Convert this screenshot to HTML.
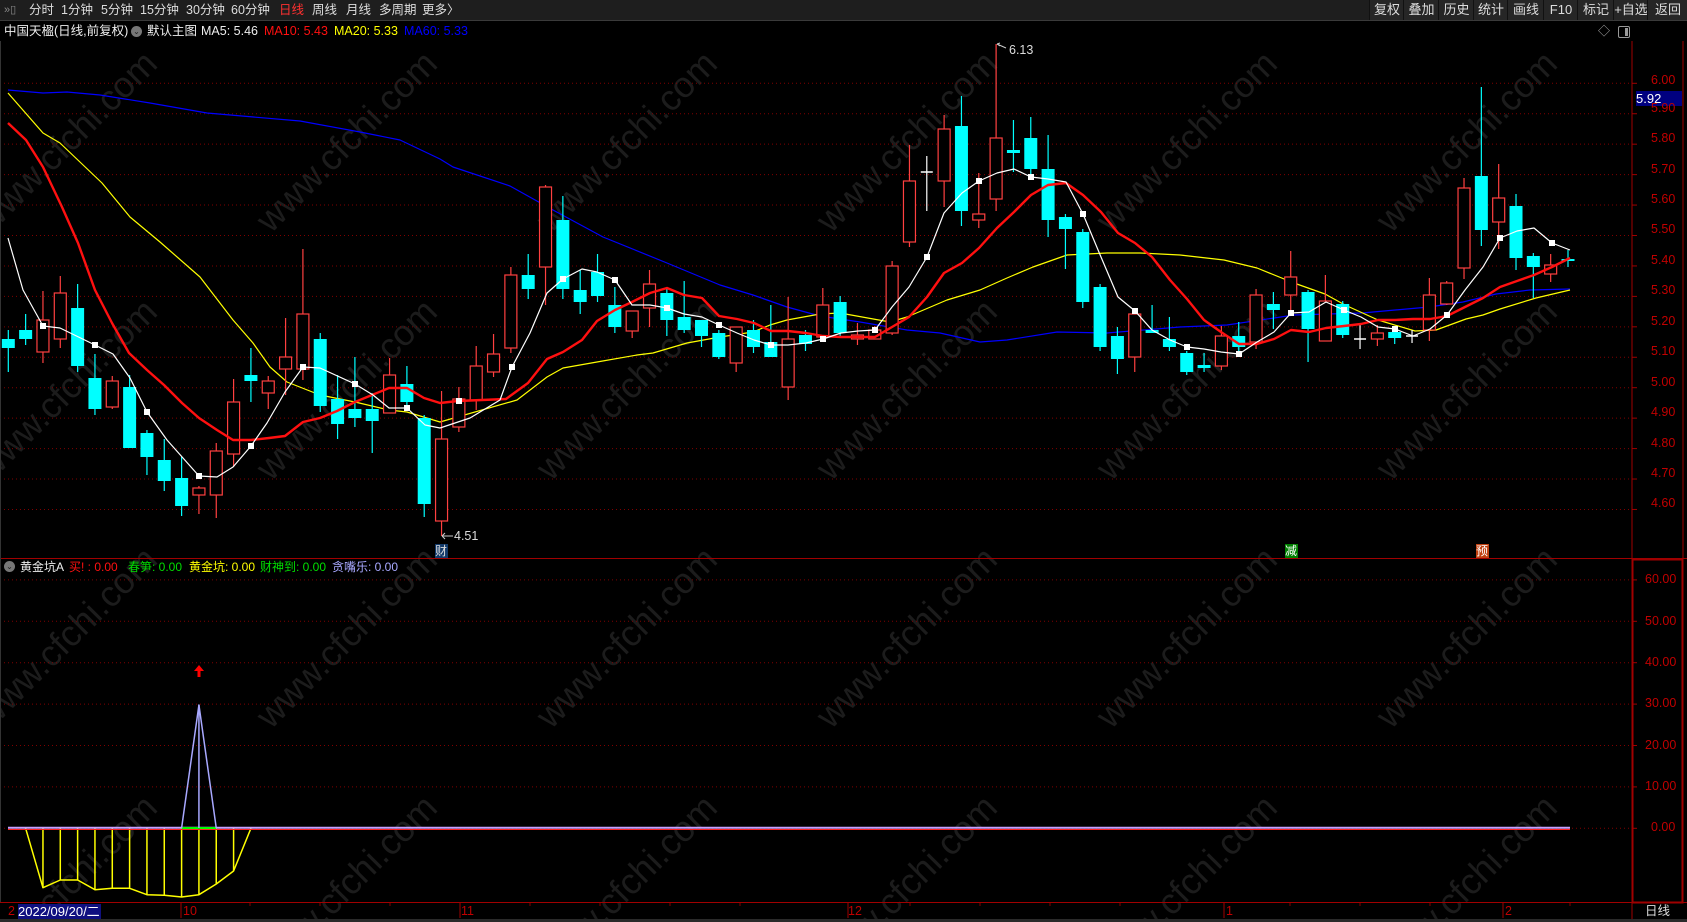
<!DOCTYPE html>
<html><head><meta charset="utf-8">
<style>
html,body{margin:0;padding:0;background:#000;width:1687px;height:922px;overflow:hidden;font-family:"Liberation Sans","Noto Sans CJK SC",sans-serif;}
.t{position:absolute;white-space:nowrap;font-size:12.5px;line-height:15px;}
.l{font-size:12px;}
#top{position:absolute;left:0;top:0;width:1687px;height:20px;background:#1e1e1e;border-bottom:1px solid #3a3a3a;}
.btn{position:absolute;top:0;height:20px;background:#262626;border-left:1px solid #111;color:#ddd;font-size:13px;line-height:20px;text-align:center;}
svg{position:absolute;left:0;top:0;}
</style></head><body>
<svg id="s" width="1687" height="922" xmlns="http://www.w3.org/2000/svg"></svg>
<div id="top"></div>
<div class="t" style="left:4px;top:3px;color:#888;font-size:11px">»▯</div>
<div class="t" style="left:29px;top:3px;color:#ddd">分时</div>
<div class="t" style="left:61px;top:3px;color:#ddd">1分钟</div>
<div class="t" style="left:101px;top:3px;color:#ddd">5分钟</div>
<div class="t" style="left:140px;top:3px;color:#ddd">15分钟</div>
<div class="t" style="left:186px;top:3px;color:#ddd">30分钟</div>
<div class="t" style="left:231px;top:3px;color:#ddd">60分钟</div>
<div class="t" style="left:279px;top:3px;color:#ff3030">日线</div>
<div class="t" style="left:312px;top:3px;color:#ddd">周线</div>
<div class="t" style="left:346px;top:3px;color:#ddd">月线</div>
<div class="t" style="left:379px;top:3px;color:#ddd">多周期</div>
<div class="t" style="left:422px;top:3px;color:#ddd">更多〉</div>
<div class="btn" style="left:1369px;width:34px">复权</div>
<div class="btn" style="left:1403px;width:35px">叠加</div>
<div class="btn" style="left:1438px;width:35px">历史</div>
<div class="btn" style="left:1473px;width:34px">统计</div>
<div class="btn" style="left:1507px;width:36px">画线</div>
<div class="btn" style="left:1543px;width:34px">F10</div>
<div class="btn" style="left:1577px;width:36px">标记</div>
<div class="btn" style="left:1613px;width:34px">+自选</div>
<div class="btn" style="left:1647px;width:40px">返回</div>

<div class="t" style="left:4px;top:24px;color:#eee">中国天楹(日线,前复权)</div>
<div class="t" style="left:131px;top:26px;width:11px;height:11px;border-radius:6px;background:#777;line-height:11px;font-size:8px;text-align:center;color:#222">⌄</div>
<div class="t" style="left:147px;top:24px;color:#eee">默认主图</div>
<div class="t" style="left:201px;top:24px;color:#eee">MA5: 5.46</div>
<div class="t" style="left:264px;top:24px;color:#ff1010">MA10: 5.43</div>
<div class="t" style="left:334px;top:24px;color:#ffff00">MA20: 5.33</div>
<div class="t" style="left:404px;top:24px;color:#0000ff">MA60: 5.33</div>
<div class="t" style="left:1598px;top:24px;color:#aaa;font-size:12px">◇</div>
<div class="t" style="left:1618px;top:26px;width:10px;height:10px;border:1px solid #999;border-radius:2px"><div style="position:absolute;right:1px;top:1px;width:3px;height:8px;background:#999"></div></div>

<div class="t" style="left:1009px;top:43px;color:#ddd">6.13</div>
<div class="t" style="left:454px;top:529px;color:#ddd">4.51</div>
<div class="t" style="left:435px;top:544px;width:13px;height:14px;background:#123a6a;color:#ddd;font-size:12px;line-height:14px">财</div>
<div class="t" style="left:1285px;top:544px;width:13px;height:14px;background:#008000;color:#fff;font-size:12px;line-height:14px">减</div>
<div class="t" style="left:1476px;top:544px;width:13px;height:14px;background:#c04010;color:#fff;font-size:12px;line-height:14px">预</div>

<div class="t" style="left:4px;top:561px;width:11px;height:11px;border-radius:6px;background:#777;line-height:11px;font-size:8px;text-align:center;color:#222">⌄</div>
<div class="t l" style="left:20px;top:560px;color:#eee">黄金坑A</div>
<div class="t l" style="left:69px;top:560px;color:#ff1010">买! : 0.00</div>
<div class="t l" style="left:128px;top:560px;color:#00dd00">春笋: 0.00</div>
<div class="t l" style="left:189px;top:560px;color:#ffff00">黄金坑: 0.00</div>
<div class="t l" style="left:260px;top:560px;color:#00dd00">财神到: 0.00</div>
<div class="t l" style="left:332px;top:560px;color:#a8a8ff">贪嘴乐: 0.00</div>

<div class="t" style="left:1636px;top:91px;width:46px;height:15px;background:#000080;color:#fff;font-size:13px">5.92</div>

<div class="t" style="left:18px;top:904px;width:83px;height:15px;background:#101080;color:#fff;font-size:13px">2022/09/20/二</div>
<div class="t" style="left:8px;top:904px;color:#c00000">2</div>
<div class="t" style="left:183px;top:904px;color:#c00000">10</div>
<div class="t" style="left:461px;top:904px;color:#c00000">11</div>
<div class="t" style="left:848px;top:904px;color:#c00000">12</div>
<div class="t" style="left:1226px;top:904px;color:#c00000">1</div>
<div class="t" style="left:1505px;top:904px;color:#c00000">2</div>
<div class="t" style="left:1645px;top:904px;color:#ddd">日线</div>

<div class="t" style="left:1651px;top:73px;color:#c00000">6.00</div>
<div class="t" style="left:1651px;top:101px;color:#c00000">5.90</div>
<div class="t" style="left:1651px;top:131px;color:#c00000">5.80</div>
<div class="t" style="left:1651px;top:162px;color:#c00000">5.70</div>
<div class="t" style="left:1651px;top:192px;color:#c00000">5.60</div>
<div class="t" style="left:1651px;top:222px;color:#c00000">5.50</div>
<div class="t" style="left:1651px;top:253px;color:#c00000">5.40</div>
<div class="t" style="left:1651px;top:283px;color:#c00000">5.30</div>
<div class="t" style="left:1651px;top:314px;color:#c00000">5.20</div>
<div class="t" style="left:1651px;top:344px;color:#c00000">5.10</div>
<div class="t" style="left:1651px;top:375px;color:#c00000">5.00</div>
<div class="t" style="left:1651px;top:405px;color:#c00000">4.90</div>
<div class="t" style="left:1651px;top:436px;color:#c00000">4.80</div>
<div class="t" style="left:1651px;top:466px;color:#c00000">4.70</div>
<div class="t" style="left:1651px;top:496px;color:#c00000">4.60</div>
<div class="t" style="left:1645px;top:572px;color:#c00000">60.00</div>
<div class="t" style="left:1645px;top:614px;color:#c00000">50.00</div>
<div class="t" style="left:1645px;top:655px;color:#c00000">40.00</div>
<div class="t" style="left:1645px;top:696px;color:#c00000">30.00</div>
<div class="t" style="left:1645px;top:738px;color:#c00000">20.00</div>
<div class="t" style="left:1645px;top:779px;color:#c00000">10.00</div>
<div class="t" style="left:1651px;top:820px;color:#c00000">0.00</div>

<script>
var s=document.getElementById('s'),h='';
for(var r=0;r<4;r++)for(var c=0;c<6;c++){var cx=75+c*280,cy=150+r*248;
h+='<text x="'+cx+'" y="'+cy+'" fill="#1c1c1c" font-size="36" font-family="Liberation Sans" text-anchor="middle" transform="rotate(-45 '+cx+' '+cy+')">www.cfchi.com</text>';}
for(var k=0;k<15;k++){var y=83.3+k*30.44;h+='<line x1="0" x2="1632" y1="'+y+'" y2="'+y+'" stroke="#800000" stroke-dasharray="1,3"/><line x1="1632" x2="1637" y1="'+y+'" y2="'+y+'" stroke="#a00000"/>';}
for(var k=0;k<7;k++){var y=828.3-k*41.4;h+='<line x1="0" x2="1632" y1="'+y+'" y2="'+y+'" stroke="#800000" stroke-dasharray="1,3"/><line x1="1632" x2="1637" y1="'+y+'" y2="'+y+'" stroke="#a00000"/>';}
h+='<line x1="0" x2="1687" y1="558.5" y2="558.5" stroke="#a00000"/>';
h+='<line x1="0" x2="1687" y1="902.5" y2="902.5" stroke="#a00000"/>';
h+='<line x1="1632" x2="1632" y1="41" y2="922" stroke="#a00000"/>';
h+='<rect x="1632.5" y="559.5" width="50" height="343" fill="none" stroke="#a00000" stroke-width="2"/>';
h+='<line x1="1683" x2="1683" y1="41" y2="558" stroke="#a00000"/>';
h+='<line x1="0.5" x2="0.5" y1="41" y2="902" stroke="#333"/>';
h+='<rect x="0" y="919" width="1687" height="3" fill="#2a2a2a"/>';
[181,460,848,1224,1503].forEach(function(x){h+='<line x1="'+x+'" x2="'+x+'" y1="903" y2="918" stroke="#a00000"/>';});
[250,320,390,530,600,670,740,910,980,1050,1120,1290,1360,1430,1570].forEach(function(x){h+='<line x1="'+x+'" x2="'+x+'" y1="903" y2="906" stroke="#800000"/>';});
function X(i){return 8.3+17.33*i;}
function pl(pts,col,w){var d=pts.map(function(p){return p[0]+','+p[1]}).join(' ');h+='<polyline points="'+d+'" fill="none" stroke="'+col+'" stroke-width="'+w+'" stroke-linejoin="round"/>';}
pl([[8,90],[43,93],[67,92],[100,95],[150,103],[207,113],[300,121],[360,132],[400,140],[440,159],[453,167],[510,186],[553,210],[603,237],[667,263],[720,285],[753,295],[787,307],[820,316],[860,322],[907,330],[940,333],[980,342],[1007,340],[1057,332],[1107,333],[1180,327],[1227,325],[1294,315],[1362,313],[1429,307],[1463,302],[1496,294],[1530,290],[1570,289]],'#0000ff',1.2);
pl([[8,93],[43,133],[60,143],[102,183],[130,217],[160,242],[200,277],[233,320],[253,343],[270,367],[287,382],[320,395],[355,402],[389,410],[407,412],[440,422],[517,400],[547,377],[563,368],[597,362],[637,355],[653,353],[687,343],[720,337],[753,332],[770,325],[787,320],[820,314],[840,313],[890,322],[907,317],[947,300],[980,290],[1007,278],[1033,267],[1067,255],[1107,253],[1140,253],[1180,255],[1224,260],[1257,268],[1294,283],[1325,294],[1345,305],[1378,320],[1415,331],[1436,330],[1466,319],[1483,315],[1500,309],[1536,298],[1570,290]],'#ffff00',1.2);
var C=[['c',339,348,330,372],['c',330,339,314,345],['r',320,352,291,363],['r',293,339,276,348],['c',308,366,284,372],['c',378,409,354,415],['r',381,407,376,409],['c',387,448,375,448],['c',433,457,430,475],['c',460,481,439,491],
['c',478,506,457,516],['r',488,495,486,514],['r',451,495,443,518],['r',402,454,379,467],['c',375,381,348,402],['r',381,393,376,409],['r',357,369,318,395],['r',314,369,249,380],['c',339,406,333,412],['c',399,424,375,439],
['c',409,418,357,427],['c',409,421,393,453],['r',375,413,358,413],['c',384,402,366,409],['c',418,504,415,517],['r',439,521,391,536],['r',399,427,387,432],['r',366,400,346,410],['r',354,372,334,377],['r',275,348,267,353],
['c',275,289,254,299],['r',187,267,185,305],['c',220,289,196,299],['c',290,302,270,314],['c',272,296,254,302],['c',305,327,287,333],['r',311,331,311,338],['r',284,308,270,327],['c',293,320,287,336],['c',317,330,281,333],
['c',320,336,320,347],['c',333,357,330,359],['r',327,363,327,372],['c',330,347,320,353],['c',342,357,305,357],['r',339,387,297,400],['c',335,344,330,351],['r',305,337,288,342],['c',302,333,296,336],['r',335,339,323,345],
['r',330,339,326,339],['r',266,333,261,335],['r',181,242,145,247],['w',172,172,156,211],['r',129,181,115,207],['c',126,211,96,226],['r',214,220,173,228],['r',138,199,44,211],['c',150,153,120,172],['c',138,169,117,177],
['c',169,220,135,237],['c',217,229,214,269],['c',232,302,229,308],['c',287,347,284,351],['c',336,359,327,374],['r',314,357,314,372],['c',330,333,305,333],['c',339,347,317,351],['c',353,372,351,375],['c',365,368,353,372],
['r',336,366,326,370],['c',336,347,322,351],['r',295,342,289,349],['c',304,310,292,329],['r',277,295,251,310],['c',292,329,290,362],['r',301,341,275,341],['c',304,335,301,338],['w',339,339,324,349],['r',333,339,325,346],
['c',332,338,328,344],['w',336,336,330,343],['r',295,330,278,341],['r',283,304,281,305],['r',188,268,178,279],['c',176,230,87,246],['r',198,222,164,249],['c',206,258,194,270],['c',256,267,253,298],['r',265,274,254,282],['c',259,261,250,267]];
C.forEach(function(c,i){var x=X(i),t=c[0];
 if(t=='c'){h+='<line x1="'+x+'" x2="'+x+'" y1="'+c[3]+'" y2="'+c[4]+'" stroke="#00ffff" stroke-width="1.2"/><rect x="'+(x-6.5)+'" y="'+c[1]+'" width="13" height="'+Math.max(2,c[2]-c[1])+'" fill="#00ffff"/>';}
 else if(t=='r'){h+='<line x1="'+x+'" x2="'+x+'" y1="'+c[3]+'" y2="'+c[1]+'" stroke="#ff4040" stroke-width="1.2"/><line x1="'+x+'" x2="'+x+'" y1="'+c[2]+'" y2="'+c[4]+'" stroke="#ff4040" stroke-width="1.2"/><rect x="'+(x-6)+'" y="'+c[1]+'" width="12" height="'+Math.max(1,c[2]-c[1])+'" fill="#000" stroke="#ff4040" stroke-width="1.2"/>';}
 else {h+='<line x1="'+x+'" x2="'+x+'" y1="'+c[3]+'" y2="'+c[4]+'" stroke="#fff" stroke-width="1.2"/><line x1="'+(x-6)+'" x2="'+(x+6)+'" y1="'+c[1]+'" y2="'+c[1]+'" stroke="#fff" stroke-width="1.5"/>';}
});
pl([[8,123],[26,140],[43,167],[62,207],[78,243],[95,290],[112,323],[129,353],[147,370],[164,385],[182,403],[199,418],[217,430],[233,440],[251,440],[269,438],[285,436],[303,422],[320,418],[337,411],[355,402],[372,395],[389,388],[407,388],[424,398],[440,403],[458,401],[506,399],[528,383],[547,359],[563,352],[582,340],[597,321],[615,310],[632,302],[650,293],[667,288],[684,295],[702,298],[719,316],[737,319],[754,323],[771,331],[788,331],[806,333],[823,336],[841,337],[858,337],[875,337],[892,327],[909,317],[927,297],[944,273],[962,263],[979,248],[997,228],[1014,212],[1031,195],[1048,185],[1066,183],[1083,195],[1101,212],[1118,233],[1135,243],[1152,257],[1170,280],[1187,299],[1204,320],[1221,332],[1239,344],[1257,344],[1274,339],[1291,330],[1309,332],[1326,328],[1344,326],[1361,324],[1378,320],[1395,320],[1413,319],[1430,319],[1447,316],[1465,307],[1483,298],[1500,287],[1517,281],[1534,275],[1552,267],[1570,258]],'#ff1010',2.4);
var m5=[[8,238],[23,290],[43,326],[60,328],[95,345],[113,354],[130,378],[147,412],[167,440],[199,476],[217,477],[233,467],[251,446],[267,423],[285,392],[303,367],[320,368],[355,384],[373,395],[389,408],[407,408],[425,425],[440,428],[470,418],[500,400],[512,367],[530,333],[547,293],[563,279],[582,269],[597,272],[615,280],[632,305],[650,305],[667,308],[684,314],[702,317],[719,325],[737,333],[754,340],[771,345],[788,345],[806,343],[823,339],[841,333],[858,331],[875,330],[892,307],[909,287],[927,257],[944,213],[962,193],[979,181],[997,173],[1014,169],[1031,177],[1048,179],[1066,182],[1083,214],[1101,257],[1118,297],[1135,311],[1152,330],[1170,340],[1187,347],[1204,349],[1221,352],[1239,354],[1257,342],[1274,332],[1291,313],[1309,312],[1326,302],[1344,310],[1361,317],[1378,327],[1395,329],[1413,336],[1430,329],[1447,315],[1465,290],[1483,267],[1500,238],[1517,231],[1534,228],[1552,243],[1570,250]];
pl(m5,'#ffffff',1.2);
[[43,326],[95,345],[147,412],[199,476],[251,446],[303,367],[355,384],[407,408],[459,401],[512,367],[563,279],[615,280],[667,308],[719,325],[771,345],[823,339],[875,330],[927,257],[979,181],[1031,177],[1083,214],[1135,311],[1187,347],[1239,354],[1291,313],[1344,310],[1395,329],[1447,315],[1500,238],[1552,243]].forEach(function(p){h+='<rect x="'+(p[0]-3)+'" y="'+(p[1]-3)+'" width="6" height="6" fill="#fff"/>';});
h+='<line x1="997" x2="1006" y1="44" y2="48" stroke="#ccc"/><path d="M997 44 l3 -1 M997 44 l3 2" stroke="#ccc" fill="none"/>';
h+='<line x1="442" x2="453" y1="536" y2="536" stroke="#ccc"/><path d="M442 536 l3 -3 M442 536 l3 3" stroke="#ccc" fill="none"/>';
var Z=828.3,yv=[828.3,887.7,880,880,889.7,888.3,888.3,894.7,895.3,897,894.7,884,871,828.3];
var yp=[];for(var i=0;i<14;i++){yp.push([X(i+1),yv[i]]);if(i>0&&i<13)h+='<line x1="'+X(i+1)+'" x2="'+X(i+1)+'" y1="'+Z+'" y2="'+yv[i]+'" stroke="#ffff00" stroke-width="1.5"/>';}
pl(yp,'#ffff00',1.5);
h+='<line x1="8" x2="1570" y1="829.5" y2="829.5" stroke="#ff2020" stroke-width="1"/>';
h+='<line x1="8" x2="1570" y1="827.8" y2="827.8" stroke="#c8a0ff" stroke-width="2"/>';
h+='<line x1="'+X(10)+'" x2="'+X(12)+'" y1="828" y2="828" stroke="#00ff00" stroke-width="2"/>';
pl([[X(10),828],[X(11),705],[X(12),828]],'#a8a8ff',1.5);
h+='<line x1="'+X(11)+'" x2="'+X(11)+'" y1="705" y2="828" stroke="#a8a8ff" stroke-width="1.5"/>';
h+='<path d="M199 665 l-5 6 h3.5 v6 h3 v-6 h3.5 z" fill="#ff0000"/>';
s.innerHTML=h;
</script>
</body></html>
